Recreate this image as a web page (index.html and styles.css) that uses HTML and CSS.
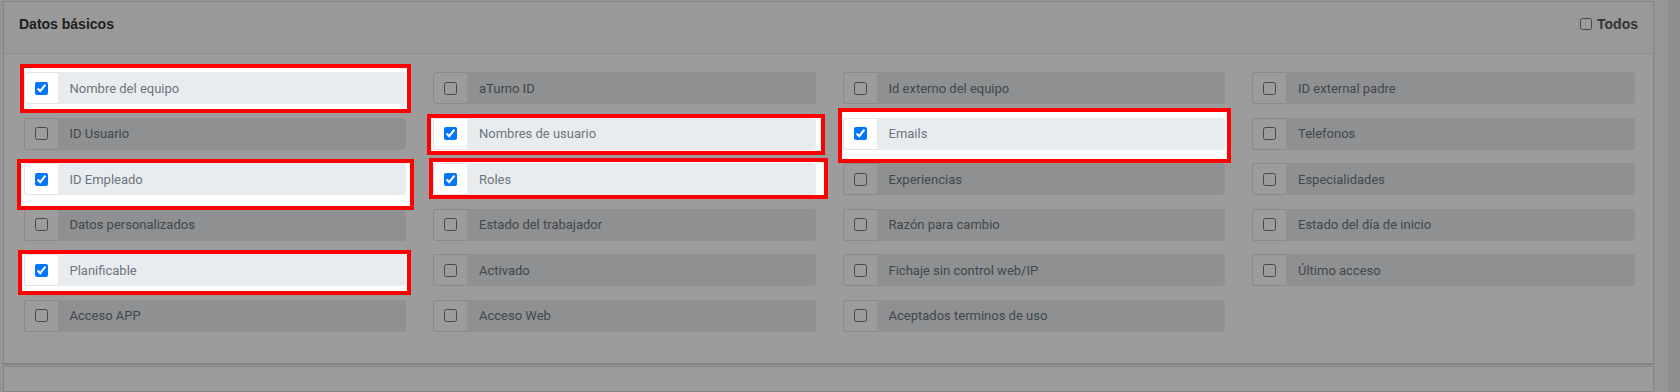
FILE: index.html
```html
<!DOCTYPE html>
<html lang="es">
<head>
    <meta charset="UTF-8">
    <meta name="viewport" content="width=device-width, initial-scale=1.0">
    <title>Datos básicos</title>
    <link rel="stylesheet" href="styles.css">
</head>
<body>
    <div class="layout">
        <main class="content">
            <section class="panel">
                <div class="panel-head">
                    <span class="panel-title">Datos básicos</span>
                    <label class="all-toggle"><input type="checkbox"> Todos</label>
                </div>
                <div class="panel-body">
                    <!-- fila 1 -->
                    <label class="field field-marked mark-1">
                        <span class="field-check"><input type="checkbox" checked></span>
                        <span class="field-name">Nombre del equipo</span>
                    </label>
                    <label class="field">
                        <span class="field-check"><input type="checkbox"></span>
                        <span class="field-name">aTurno ID</span>
                    </label>
                    <label class="field">
                        <span class="field-check"><input type="checkbox"></span>
                        <span class="field-name">Id externo del equipo</span>
                    </label>
                    <label class="field">
                        <span class="field-check"><input type="checkbox"></span>
                        <span class="field-name">ID external padre</span>
                    </label>

                    <!-- fila 2 -->
                    <label class="field">
                        <span class="field-check"><input type="checkbox"></span>
                        <span class="field-name">ID Usuario</span>
                    </label>
                    <label class="field field-marked mark-2">
                        <span class="field-check"><input type="checkbox" checked></span>
                        <span class="field-name">Nombres de usuario</span>
                    </label>
                    <label class="field field-marked mark-4">
                        <span class="field-check"><input type="checkbox" checked></span>
                        <span class="field-name">Emails</span>
                    </label>
                    <label class="field">
                        <span class="field-check"><input type="checkbox"></span>
                        <span class="field-name">Telefonos</span>
                    </label>

                    <!-- fila 3 -->
                    <label class="field field-marked mark-5">
                        <span class="field-check"><input type="checkbox" checked></span>
                        <span class="field-name">ID Empleado</span>
                    </label>
                    <label class="field field-marked mark-3">
                        <span class="field-check"><input type="checkbox" checked></span>
                        <span class="field-name">Roles</span>
                    </label>
                    <label class="field">
                        <span class="field-check"><input type="checkbox"></span>
                        <span class="field-name">Experiencias</span>
                    </label>
                    <label class="field">
                        <span class="field-check"><input type="checkbox"></span>
                        <span class="field-name">Especialidades</span>
                    </label>

                    <!-- fila 4 -->
                    <label class="field">
                        <span class="field-check"><input type="checkbox"></span>
                        <span class="field-name">Datos personalizados</span>
                    </label>
                    <label class="field">
                        <span class="field-check"><input type="checkbox"></span>
                        <span class="field-name">Estado del trabajador</span>
                    </label>
                    <label class="field">
                        <span class="field-check"><input type="checkbox"></span>
                        <span class="field-name">Razón para cambio</span>
                    </label>
                    <label class="field">
                        <span class="field-check"><input type="checkbox"></span>
                        <span class="field-name">Estado del día de inicio</span>
                    </label>

                    <!-- fila 5 -->
                    <label class="field field-marked mark-6">
                        <span class="field-check"><input type="checkbox" checked></span>
                        <span class="field-name">Planificable</span>
                    </label>
                    <label class="field">
                        <span class="field-check"><input type="checkbox"></span>
                        <span class="field-name">Activado</span>
                    </label>
                    <label class="field">
                        <span class="field-check"><input type="checkbox"></span>
                        <span class="field-name">Fichaje sin control web/IP</span>
                    </label>
                    <label class="field">
                        <span class="field-check"><input type="checkbox"></span>
                        <span class="field-name">Último acceso</span>
                    </label>

                    <!-- fila 6 -->
                    <label class="field">
                        <span class="field-check"><input type="checkbox"></span>
                        <span class="field-name">Acceso APP</span>
                    </label>
                    <label class="field">
                        <span class="field-check"><input type="checkbox"></span>
                        <span class="field-name">Acceso Web</span>
                    </label>
                    <label class="field">
                        <span class="field-check"><input type="checkbox"></span>
                        <span class="field-name">Aceptados terminos de uso</span>
                    </label>
                </div>
            </section>
            <section class="panel panel-next"></section>
        </main>
        <div class="side-strip"></div>
    </div>

    <!-- fondo oscuro del modal -->
    <div class="backdrop"></div>
</body>
</html>
```

FILE: styles.css
```css
body {
    margin: 0;
    height: 392px;
    overflow: hidden;
    background-color: #f6f6f6;
    font-family: Roboto, "Liberation Sans", Arial, sans-serif;
    color: #333;
}
.layout {
    display: flex;
    height: 100%;
}
.content {
    flex: 1;
    display: flex;
    flex-direction: column;
    gap: 2px;
    padding: 1px 14px 0 3px;
    min-width: 0;
}
.side-strip {
    width: 12px;
    background-color: #e8e8e8;
}
.panel {
    background-color: #fff;
    border: 1px solid #dadada;
    box-shadow: 0 1px 1px rgba(0,0,0,0.12);
}
.panel-next {
    flex: 1;
}
.panel-head {
    display: flex;
    justify-content: space-between;
    align-items: flex-start;
    box-sizing: border-box;
    height: 52px;
    padding: 14px 15px 0 15px;
    background-color: #fafafa;
    border-bottom: 1px solid #e6e6e6;
    font: bold 14px/16px "Liberation Sans", Arial, sans-serif;
}
.panel-title {
    color: #333;
}
.all-toggle {
    display: flex;
    align-items: center;
    gap: 5px;
    color: #555;
}
.all-toggle input {
    width: 12px;
    height: 12px;
    margin: 0;
}
.panel-body {
    display: grid;
    grid-template-columns: repeat(4, 1fr);
    grid-auto-rows: 32px;
    column-gap: 27px;
    row-gap: 13.5px;
    padding: 18.3px 18.5px 31px 19.5px;
}
.field {
    display: flex;
    font-size: 13px;
    color: #6c757d;
}
.field-check {
    display: flex;
    align-items: center;
    justify-content: center;
    box-sizing: border-box;
    width: 34px;
    background-color: #fff;
    border: 1px solid #dfe3e7;
    border-right: none;
    border-radius: 3px 0 0 3px;
}
.field-check input {
    margin: 0;
    width: 13px;
    height: 13px;
}
.field-name {
    flex: 1;
    display: flex;
    align-items: center;
    padding-left: 12px;
    background-color: #e9ecef;
    border-radius: 0 3px 3px 0;
    white-space: nowrap;
}
.backdrop {
    position: fixed;
    inset: 0;
    background-color: rgba(0,0,0,0.39);
    z-index: 5;
}

/* campos resaltados por encima del fondo */
.field-marked {
    position: relative;
    z-index: 6;
}
.field-marked::before {
    content: "";
    position: absolute;
    z-index: -1;
    background-color: #fff;
    border: 4px solid #ff0000;
    inset: -5px -7px -9px -5px;
}
.mark-1::before { inset: -8px -5px -9px -4px; }
.mark-2::before { inset: -4px -9px -5px -6px; }
.mark-3::before { inset: -5px -12px -4px -4px; }
.mark-4::before { inset: -10px -6px -13px -5px; }
.mark-5::before { inset: -4px -8px -15px -7px; }
.mark-6::before { inset: -4px -5px -9px -6px; }
```
